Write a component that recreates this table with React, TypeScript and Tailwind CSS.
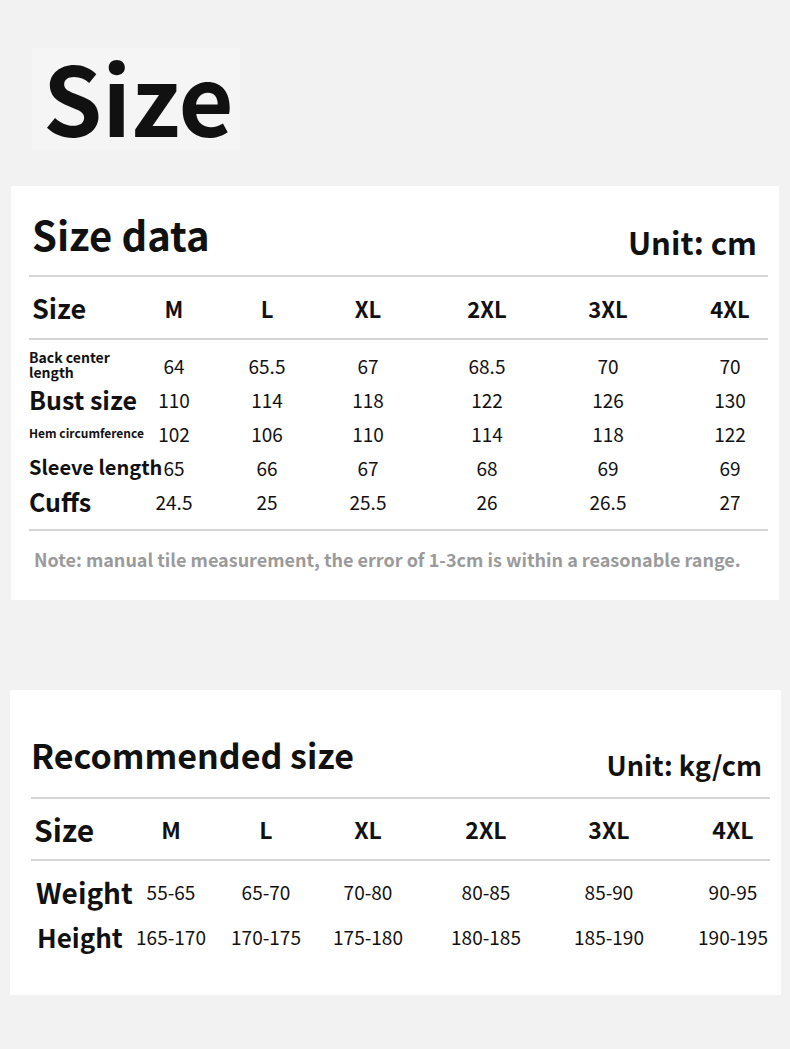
import React from "react";

const FONT = "font-['Noto_Sans_CJK_SC','Noto_Sans',sans-serif]";

const sizes = ["M", "L", "XL", "2XL", "3XL", "4XL"];

const rows1: { label: string; cls: string; vals: string[] }[] = [
  { label: "Back center length", cls: "text-[14px] leading-[15px] w-[90px] whitespace-normal", vals: ["64", "65.5", "67", "68.5", "70", "70"] },
  { label: "Bust size", cls: "text-[25px] leading-none whitespace-nowrap", vals: ["110", "114", "118", "122", "126", "130"] },
  { label: "Hem circumference", cls: "text-[12px] leading-none whitespace-nowrap", vals: ["102", "106", "110", "114", "118", "122"] },
  { label: "Sleeve length", cls: "text-[20px] leading-none whitespace-nowrap", vals: ["65", "66", "67", "68", "69", "69"] },
  { label: "Cuffs", cls: "text-[25px] leading-none whitespace-nowrap", vals: ["24.5", "25", "25.5", "26", "26.5", "27"] },
];

const rows2 = [
  { label: "Weight", cls: "pl-[5px] text-[28px]", vals: ["55-65", "65-70", "70-80", "80-85", "85-90", "90-95"] },
  { label: "Height", cls: "pl-[6px] text-[26px]", vals: ["165-170", "170-175", "175-180", "180-185", "185-190", "190-195"] },
];

function Line() {
  return <div className="h-[2px] bg-[#d5d5d5]" />;
}

export default function App() {
  return (
    <div className={`${FONT} w-[790px] min-h-[1049px] bg-[#f2f2f2] pt-[48px] text-[#111]`}>
      <div className="ml-[32px] w-[208px] h-[102px] bg-[#f5f5f5] pl-[11px]">
        <div className="text-[95px] leading-none font-bold">Size</div>
      </div>

      {/* Size data card */}
      <div className="mt-[36px] ml-[11px] w-[768px] h-[414px] bg-white pt-[28px] pl-[18px] pr-[11px]">
        <div className="flex justify-between items-start h-[40px]">
          <div className="ml-[3px] text-[40px] leading-none font-bold">Size data</div>
          <div className="mt-[12px] mr-[11px] text-[31px] leading-none font-bold">Unit: cm</div>
        </div>
        <div className="mt-[21px]">
          <Line />
        </div>
        <div className="grid grid-cols-[105px_80px_106px_96px_142px_100px_144px] h-[61px] items-center">
          <div className="pl-[3px] text-[27px] leading-none font-bold">Size</div>
          {sizes.map((s) => (
            <div key={s} className="text-center text-[22px] leading-none font-bold">{s}</div>
          ))}
        </div>
        <Line />
        <div className="pt-[8px] pb-[11px]">
          {rows1.map((r) => (
            <div key={r.label} className="grid grid-cols-[105px_80px_106px_96px_142px_100px_144px] h-[34px] items-center">
              <div className={`font-bold ${r.cls}`}>{r.label}</div>
              {r.vals.map((v, i) => (
                <div key={i} className="text-center text-[19px] leading-none">{v}</div>
              ))}
            </div>
          ))}
        </div>
        <Line />
        <div className="mt-[19px] ml-[5px] text-[18px] leading-none font-bold text-[#9a9a9a] whitespace-nowrap">
          Note: manual tile measurement, the error of 1-3cm is within a reasonable range.
        </div>
      </div>

      {/* Recommended size card */}
      <div className="mt-[90px] ml-[10px] w-[771px] h-[305px] bg-white pt-[48px] pl-[21px] pr-[11px]">
        <div className="flex justify-between items-start h-[34px]">
          <div className="text-[34px] leading-none font-bold">Recommended size</div>
          <div className="mt-[13px] mr-[8px] text-[27px] leading-none font-bold">Unit: kg/cm</div>
        </div>
        <div className="mt-[25px]">
          <Line />
        </div>
        <div className="grid grid-cols-[100px_80px_110px_94px_142px_104px_144px] h-[60px] items-center">
          <div className="pl-[3px] text-[30px] leading-none font-bold">Size</div>
          {sizes.map((s) => (
            <div key={s} className="text-center text-[23px] leading-none font-bold">{s}</div>
          ))}
        </div>
        <Line />
        <div className="pt-[8px]">
          {rows2.map((r) => (
            <div key={r.label} className="grid grid-cols-[100px_80px_110px_94px_142px_104px_144px] h-[45px] items-center">
              <div className={`${r.cls} leading-none font-bold whitespace-nowrap`}>{r.label}</div>
              {r.vals.map((v, i) => (
                <div key={i} className="text-center text-[19px] leading-none whitespace-nowrap">{v}</div>
              ))}
            </div>
          ))}
        </div>
      </div>
    </div>
  );
}
